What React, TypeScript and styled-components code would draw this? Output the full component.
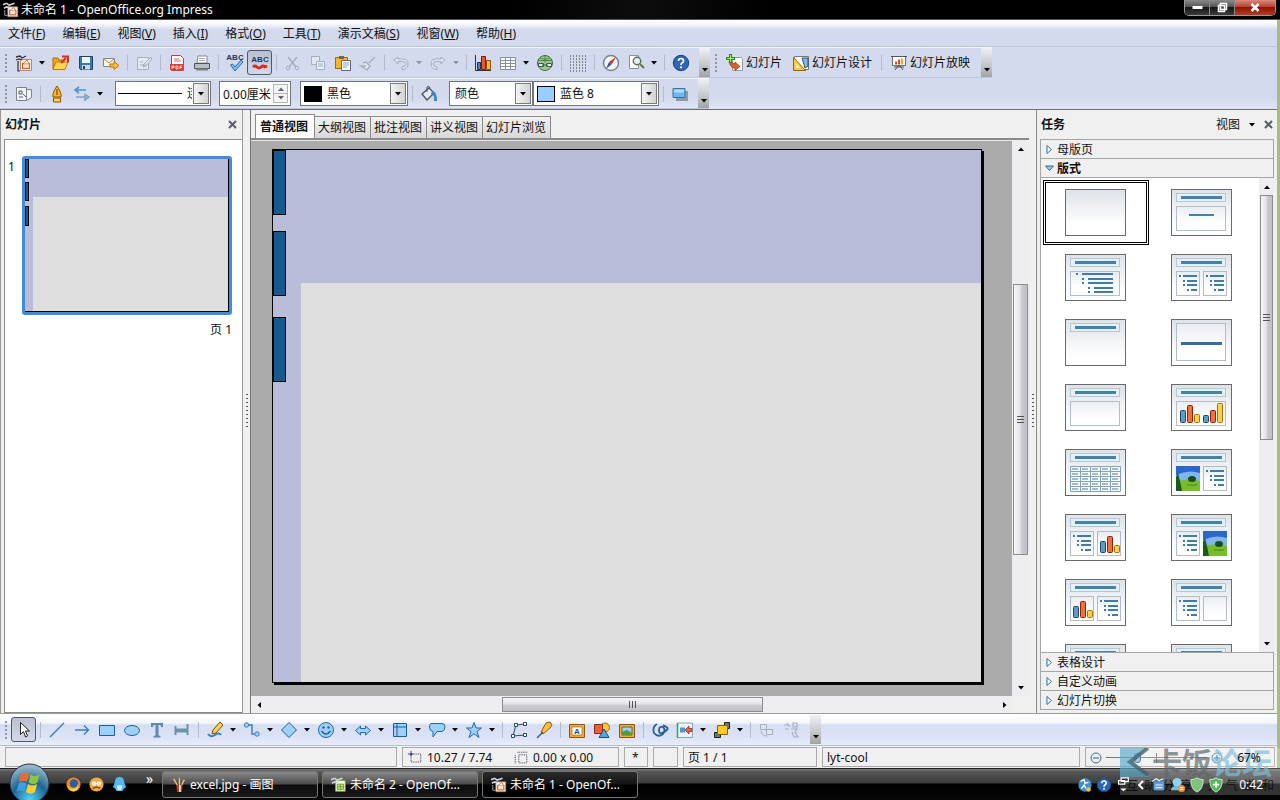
import React from "react";
import styled, { createGlobalStyle, css } from "styled-components";

const Global = createGlobalStyle`
  * { box-sizing: border-box; }
  html, body { margin: 0; padding: 0; }
  body, button, input, select {
    font-family: "Noto Sans", "Noto Sans CJK SC", sans-serif;
    font-size: 12px;
    line-height: 16px;
    color: #111;
  }
  button { border: 0; padding: 0; margin: 0; background: none; }
  svg { display: block; flex: none; }
`;

/* ---------- window frame ---------- */

const Desktop = styled.div`
  height: 100vh;
  display: flex;
  flex-direction: column;
  overflow: hidden;
  position: relative;
  background: #000;
`;

const Window = styled.div`
  flex: 1;
  min-height: 0;
  display: flex;
  flex-direction: column;
  border-right: 3px solid #a9bb83;
  background: #f0f0f0;
`;

const TitleBar = styled.header`
  height: 20px;
  margin-right: -3px;
  display: flex;
  align-items: center;
  gap: 2px;
  padding-left: 3px;
  background: linear-gradient(100deg, #000 40%, #0d0d0d 50%, #000 60%);
  border-bottom: 1px solid #555;
`;

const TitleText = styled.h1`
  margin: 0;
  flex: 1;
  font-size: 12px;
  line-height: 16px;
  font-weight: 400;
  color: #fff;
`;

const WindowButtons = styled.div`
  align-self: flex-start;
  display: flex;
  height: 16px;
  margin-right: 4px;
  border: 1px solid #999;
  border-top: 0;
  border-radius: 0 0 5px 5px;
  overflow: hidden;
`;

const WindowButton = styled.button<{ $close?: boolean }>`
  width: ${(p) => (p.$close ? 40 : 25)}px;
  height: 15px;
  display: flex;
  justify-content: center;
  align-items: center;
  border-right: ${(p) => (p.$close ? 0 : 1)}px solid #888;
  background: ${(p) =>
    p.$close
      ? "linear-gradient(#d98a7c, #b8432f 45%, #8e1404 50%, #b83a20)"
      : "linear-gradient(#8a8a8a, #555 45%, #161616 50%, #3c3c3c)"};
`;

const Ribbon = styled.div`
  background: linear-gradient(#fff, #f5f7fc 4px, #d3daed 10px, #d3daed 78px, #e0e6f6);
  border-bottom: 1px solid #6d6f78;
`;

const MenuBar = styled.nav`
  height: 27px;
  display: flex;
  align-items: flex-end;
  gap: 1px;
  border-bottom: 1px solid #bfc6d8;
`;

const MenuItem = styled.button`
  height: 24px;
  padding: 0 8px;
`;

/* ---------- toolbars ---------- */

const BarRow = styled.div`
  height: 31px;
  display: flex;
`;

const Bar = styled.div`
  display: flex;
  align-items: center;
  height: 31px;
  padding-left: 3px;
  border-top: 1px solid #f2f5fc;
  border-bottom: 1px solid #c0c7da;
`;

const DrawingBar = styled.div`
  flex: none;
  height: 33px;
  display: flex;
  align-items: center;
  padding-left: 3px;
  border-top: 1px solid #9a9a9a;
  border-bottom: 1px solid #b9bfcd;
  background: linear-gradient(#fff, #f4f6fd 9px, #d6def2 11px, #dde3f6 24px, #e9edf9);
`;

const Grip = styled.div`
  flex: none;
  width: 8px;
  height: 20px;
  background: radial-gradient(circle at 3px 2px, #8d96ab 1px, transparent 1px) 0 0 / 8px 4px;
`;

const ToolButton = styled.button<{ $pressed?: boolean }>`
  flex: none;
  width: 25px;
  height: 25px;
  display: flex;
  align-items: center;
  justify-content: center;
  ${(p) =>
    p.$pressed &&
    css`
      border: 1px solid #4e5668;
      border-radius: 3px;
      background: linear-gradient(#b9bfd0, #d3d9e8);
    `}
`;

const LabelButton = styled.button`
  height: 25px;
  display: flex;
  align-items: center;
  gap: 2px;
  padding: 0 5px;
`;

const ArrowButton = styled.button`
  flex: none;
  width: 12px;
  height: 25px;
  display: flex;
  align-items: center;
  justify-content: center;
`;

const Separator = styled.div`
  flex: none;
  width: 8px;
  height: 16px;
  background: linear-gradient(#b4bbcd, #b4bbcd) center / 1px 100% no-repeat;
`;

const Overflow = styled.button`
  flex: none;
  width: 11px;
  height: 29px;
  margin-left: 6px;
  display: flex;
  align-items: flex-end;
  justify-content: center;
  padding-bottom: 5px;
  background: linear-gradient(#eef0f6, #c5c6ca 60%, #a2a3a6);
`;

const Field = styled.div<{ $width: number; $gap?: number }>`
  position: relative;
  flex: none;
  width: ${(p) => p.$width}px;
  height: 25px;
  margin-left: ${(p) => p.$gap ?? 0}px;
  display: flex;
  align-items: center;
  border: 1px solid #6f7480;
  background: #fff;
`;

const Swatch = styled.span<{ $color: string }>`
  flex: none;
  width: 18px;
  height: 16px;
  margin-left: 3px;
  border: 1px solid #000;
  background: ${(p) => p.$color};
`;

const FieldLine = styled.span`
  flex: none;
  width: 64px;
  height: 1px;
  margin-left: 2px;
  background: #000;
`;

const Select = styled.select`
  appearance: none;
  flex: 1;
  min-width: 0;
  height: 23px;
  padding: 0 18px 0 5px;
  margin: 0;
  border: 0;
  background: transparent;
  outline: 0;
`;

const DropMark = styled.span`
  position: absolute;
  right: 1px;
  top: 1px;
  width: 16px;
  height: 21px;
  display: flex;
  align-items: center;
  justify-content: center;
  border: 1px solid #7b7b7b;
  background: linear-gradient(90deg, #f4f4f4, #d2d2d2);
  pointer-events: none;
`;

const SpinInput = styled.input`
  flex: 1;
  min-width: 0;
  height: 21px;
  padding: 0 0 0 3px;
  border: 0;
  outline: 0;
  background: transparent;
`;

const SpinButtons = styled.div`
  width: 15px;
  height: 19px;
  margin-right: 2px;
  display: flex;
  flex-direction: column;
  border: 1px solid #b5b5b5;
`;

const SpinButton = styled.button`
  flex: 1;
  display: flex;
  align-items: center;
  justify-content: center;
  background: #f4f4f4;
  & + & { border-top: 1px solid #b5b5b5; }
`;

/* ---------- work area ---------- */

const Work = styled.main`
  flex: 1;
  min-height: 0;
  display: flex;
  background: #f0f0f0;
`;

const SlidesPanel = styled.aside`
  flex: none;
  width: 243px;
  display: flex;
  flex-direction: column;
  border-left: 1px solid #999;
  border-right: 1px solid #999;
  padding: 0 0 0 3px;
`;

const PanelHeader = styled.div<{ $end: number }>`
  flex: none;
  height: 29px;
  display: flex;
  align-items: center;
  padding: 0 ${(p) => p.$end}px 0 1px;
`;

const PanelTitle = styled.h2`
  margin: 0;
  flex: 1;
  font-size: 12px;
  line-height: 16px;
  font-weight: 700;
`;

const SlideList = styled.div`
  flex: 1;
  display: flex;
  align-items: flex-start;
  padding: 16px 10px 0 3px;
  gap: 8px;
  border: 1px solid #8c8c8c;
  border-right: 0;
  background: #fff;
`;

const SlideNumber = styled.span`
  width: 6px;
  padding-top: 3px;
`;

const Figure = styled.figure`
  margin: 0;
  flex: 1;
  text-align: right;
`;

const Thumb = styled.div`
  height: 159px;
  margin-bottom: 7px;
  border: 3px solid #3e8edd;
  border-radius: 3px;
  display: flex;
`;

const ThumbPage = styled.div`
  flex: 1;
  min-width: 0;
  display: flex;
  border-right: 1px solid #000;
  border-bottom: 1px solid #000;
`;

const SplitHandle = styled.div`
  flex: none;
  width: 7px;
  display: flex;
  align-items: center;
  justify-content: center;
  background: #f0f0f0;
`;

const SplitDots = styled.div`
  width: 2px;
  height: 36px;
  background: repeating-linear-gradient(#555 0 1px, transparent 1px 4px);
`;

const Center = styled.section`
  flex: 1;
  min-width: 0;
  display: flex;
  flex-direction: column;
  border-left: 1px solid #777;
`;

const Tabs = styled.div`
  flex: none;
  height: 30px;
  display: flex;
  align-items: flex-end;
  padding-left: 4px;
  border-bottom: 2px solid #8a8a8a;
`;

const Tab = styled.button<{ $active?: boolean }>`
  height: 22px;
  padding: 0 4px 0 3px;
  border: 1px solid #8a8a8a;
  border-left-width: 0;
  border-bottom: 0;
  background: linear-gradient(#f2f2f2, #d8d8d8);
  ${(p) =>
    p.$active &&
    css`
      height: 24px;
      padding: 0 6px 0 4px;
      border-left-width: 1px;
      background: #fff;
      font-weight: 700;
    `}
`;

const CanvasGrid = styled.div`
  flex: 1;
  min-height: 0;
  display: grid;
  grid-template-columns: minmax(0, 1fr) 17px;
  grid-template-rows: minmax(0, 1fr) 17px;
`;

const Canvas = styled.div`
  display: flex;
  min-height: 0;
  padding: 8px 30px 13px 21px;
  background: #ababab;
  border-top: 1px solid #e8e8e8;
`;

const Page = styled.div`
  flex: 1;
  min-height: 0;
  display: flex;
  border: 1px solid #000;
  box-shadow: 2px 2px 0 #000;
`;

const SlideSvg = styled.svg`
  width: 100%;
  height: 100%;
`;

const ScrollBar = styled.div<{ $horizontal?: boolean }>`
  display: flex;
  flex-direction: ${(p) => (p.$horizontal ? "row" : "column")};
  background: #eeeef0;
`;

const ScrollArrow = styled.button`
  flex: none;
  min-width: 15px;
  height: 17px;
  display: flex;
  align-items: center;
  justify-content: center;
`;

const ScrollSpace = styled.div<{ $grow: number }>`
  flex: ${(p) => p.$grow} 0 0;
`;

const ScrollThumb = styled.div<{ $grow: number; $horizontal?: boolean }>`
  flex: ${(p) => p.$grow} 0 0;
  display: flex;
  align-items: center;
  justify-content: center;
  margin: ${(p) => (p.$horizontal ? "1px 0" : "0 1px")};
  border: 1px solid #8d8d8d;
  background: linear-gradient(${(p) => (p.$horizontal ? "180deg" : "90deg")}, #f6f6f7, #e4e4e8 45%, #c9c9cf 60%, #bfbfc4);
`;

/* ---------- tasks panel ---------- */

const TasksPanel = styled.aside`
  flex: none;
  width: 241px;
  display: flex;
  flex-direction: column;
  border-left: 1px solid #8c8c8c;
  padding: 0 3px 3px;
`;

const ViewMenu = styled.button`
  display: flex;
  align-items: center;
  gap: 9px;
  margin-right: 9px;
`;

const Section = styled.button<{ $open?: boolean }>`
  flex: none;
  height: 19px;
  display: flex;
  align-items: center;
  gap: 3px;
  padding: 1px 0 0 4px;
  border: 1px solid #a5a5a5;
  border-top-width: 0;
  background: #f0f0f0;
  font-weight: ${(p) => (p.$open ? 700 : 400)};
`;

const SectionGroup = styled.div`
  flex: none;
  display: flex;
  flex-direction: column;
  border-top: 1px solid #a5a5a5;
`;

const Layouts = styled.div`
  flex: 1;
  min-height: 0;
  display: flex;
  background: #fff;
  border-left: 1px solid #a5a5a5;
`;

const LayoutGrid = styled.div`
  flex: 1;
  min-height: 0;
  overflow: hidden;
  display: grid;
  grid-template-columns: 106px 106px;
  grid-auto-rows: 65px;
  align-content: start;
  padding: 2px 0 0 2px;
`;

const LayoutButton = styled.button<{ $selected?: boolean }>`
  display: flex;
  align-items: center;
  justify-content: center;
  padding-right: 1px;
  border: 3px ${(p) => (p.$selected ? "double #000" : "solid transparent")};
`;

/* ---------- status bar ---------- */

const StatusBar = styled.footer`
  flex: none;
  height: 22px;
  display: flex;
  align-items: center;
  gap: 5px;
  padding: 0 2px 0 5px;
`;

const Cell = styled.div<{ $width?: number }>`
  flex: ${(p) => (p.$width ? "none" : "1 1 0")};
  width: ${(p) => (p.$width ? p.$width + "px" : "auto")};
  height: 20px;
  display: flex;
  align-items: center;
  padding: 1px 3px 0 4px;
  gap: 4px;
  border: 1px solid #a9a9a9;
  white-space: nowrap;
`;

const Measure = styled.span`
  flex: 1;
  display: flex;
  align-items: center;
  gap: 4px;
`;

const Zoom = styled.input`
  appearance: none;
  flex: 1;
  min-width: 0;
  height: 12px;
  margin: 0;
  background: linear-gradient(#777, #777) center / 100% 1px no-repeat,
    linear-gradient(#777, #777) center / 1px 10px no-repeat;
  &::-webkit-slider-thumb {
    appearance: none;
    width: 7px;
    height: 10px;
    border: 1px solid #3a617f;
    border-radius: 3px;
    background: #8db7d4;
  }
`;

const ZoomValue = styled.span`
  position: relative;
  z-index: 1;
  width: 44px;
  text-align: center;
`;

/* ---------- taskbar ---------- */

const TaskBar = styled.div`
  flex: none;
  height: 32px;
  position: relative;
  display: flex;
  align-items: center;
  border-top: 1px solid #222;
  background: linear-gradient(#7a7a7a, #555 3px, #3c3c3c 14px, #000 15px, #050505);
  color: #fff;
`;

const StartButton = styled.button`
  position: absolute;
  left: 9px;
  top: -6px;
`;

const QuickLaunch = styled.div`
  flex: none;
  width: 162px;
  display: flex;
  align-items: center;
  gap: 6px;
  padding-left: 65px;
`;

const Chevron = styled.button`
  color: #fff;
  margin: 0 0 12px 12px;
  font-size: 14px;
`;

const Task = styled.button<{ $active?: boolean }>`
  flex: 0 1 156px;
  height: 27px;
  margin-right: 4px;
  display: flex;
  align-items: center;
  gap: 3px;
  padding-left: 8px;
  color: #fff;
  white-space: nowrap;
  border: 1px solid #777;
  border-radius: 3px;
  background: ${(p) =>
    p.$active
      ? "linear-gradient(#2a2a2a, #151515 12px, #000 13px)"
      : "linear-gradient(#8a8a8a, #4c4c4c 12px, #0c0c0c 13px, #1a1a1a)"};
`;

const Tray = styled.div`
  position: relative;
  z-index: 1;
  margin-left: auto;
  display: flex;
  align-items: center;
  gap: 3px;
  padding-right: 17px;
`;

const Clock = styled.time`
  margin-left: 12px;
  color: #fff;
`;

const Watermark = styled.div`
  position: absolute;
  right: 0;
  bottom: 5px;
  width: 160px;
  height: 47px;
  pointer-events: none;
  background: rgba(255, 255, 255, 0.2);
`;

const WatermarkName = styled.div`
  display: flex;
  align-items: center;
  height: 29px;
  font-size: 30px;
  line-height: 29px;
  font-weight: 700;
  color: rgba(95, 105, 110, 0.7);
`;

const WatermarkBlue = styled.span`
  color: rgba(125, 190, 220, 0.7);
`;

const WatermarkMotto = styled.div`
  display: flex;
  justify-content: space-between;
  padding: 1px 6px 0;
  color: rgba(0, 0, 0, 0.75);
`;

/* ---------- drawings ---------- */

const Down = ({ c = "#000" }: { c?: string }) => (
  <svg width="6" height="4" viewBox="0 0 6 4"><path d="M0 0h6L3 3.5z" fill={c} /></svg>
);
const Up = ({ c = "#000" }: { c?: string }) => (
  <svg width="6" height="4" viewBox="0 0 6 4"><path d="M0 4h6L3 .5z" fill={c} /></svg>
);
const Side = ({ flip }: { flip?: boolean }) => (
  <svg width="4" height="6" viewBox="0 0 4 6"><path d={flip ? "M0 0v6l3.5-3z" : "M4 0v6L.5 3z"} fill="#000" /></svg>
);
const Cross = () => (
  <svg width="9" height="9" viewBox="0 0 9 9"><path d="M1 1l7 7M8 1L1 8" stroke="#5c5c66" strokeWidth="2" /></svg>
);

const G = "#a6aec0";
const B = "#3a7fc0";
const F = "#9fd0f8";

const impressPage = (
  <>
    <path d="M5.500 5.500h11v11h-11z" fill="#fff" stroke="#b98a6a" />
    <path d="M7.500 9.500h7v5h-7z" fill="#fde7d6" stroke="#d9652b" strokeWidth="1.300" />
    <path d="M8 9.500l4-3.500 2 3.500" fill="#fff" stroke="#d9652b" />
  </>
);

const icons: Record<string, React.ReactNode> = {
  newDoc: <>{impressPage}<path d="M1 3l4-1 2 2 4-2M1 6l3-1 3 1" stroke="#333" strokeWidth="1.300" fill="none" /><path d="M3 7v10h2" stroke="#333" strokeWidth="1.200" fill="none" /></>,
  impress: <>{impressPage}<path d="M0 3l4-1.500 3 2 6-2M1 7l3-1.500 4 1" stroke="#cfd6de" strokeWidth="1.800" fill="none" /><path d="M2 9v6h3" stroke="#9fb0c4" fill="none" /></>,
  calcDoc: <><path d="M5 4h11v12H5z" fill="#f4fbe6" stroke="#7ca23a" /><path d="M7 8h7v6H7zM7 11h7M10.5 8v6" fill="#c5e38b" stroke="#6a9a22" /><path d="M0 3l4-1.500 3 2 6-2M1 7l3-1.500 4 1" stroke="#cfd6de" strokeWidth="1.800" fill="none" /></>,
  open: <><path d="M1 4h5l1 2h5v9H1z" fill="#f5a21c" stroke="#b0660a" /><path d="M1 15.500L4 8h12l-3 7.500z" fill="#ffd84f" stroke="#c47a10" /><path d="M9 9l5-5M10 2.500h6V8.500" stroke="#d8331c" strokeWidth="2.200" fill="none" /></>,
  save: <><path d="M2.500 2.500h13v13h-12l-1-1z" fill="#3c79ac" stroke="#1e4668" /><path d="M5 3h8v6H5z" fill="#eef5fa" /><path d="M5 11h8v4.500H5z" fill="#c9dbe8" /><path d="M6 12h2v3H6z" fill="#1e4668" /></>,
  mail: <><path d="M1.500 4.500h11v8h-11z" fill="#fbf6e6" stroke="#8f8a78" /><path d="M2 5l5 4 5-4" stroke="#8f8a78" fill="none" /><path d="M8 10h4V7.500l5 4-5 4V13H8z" fill="#ffbf3a" stroke="#b9740c" /></>,
  edit: <><path d="M2.500 3.500h11v12h-11z" fill="#e3e8f3" stroke={G} /><path d="M5 8h3M5 11h6M16 3l-7 7-1 3 3-1 6-7z" stroke={G} fill="#dfe4f0" /></>,
  pdf: <><path d="M3.500 1.500h9l3 3v12h-12z" fill="#fff" stroke="#b44" /><path d="M2 10h14v6H2z" fill="#e33b2f" /><path d="M4 15v-3h2v1.500H4M8 12v3h1.500l.5-1.500L9.500 12zM12 15v-3h2M12 13.500h2" stroke="#fff" fill="none" strokeWidth=".8" /><path d="M6 5h5M6 7h7" stroke="#e66" /></>,
  print: <><path d="M5 2h9v7H4z" fill="#fff" stroke="#888" /><path d="M1.500 9.500h15v5h-15z" fill="#b9bfc2" stroke="#4f5759" /><path d="M3 14.500h12v2H3z" fill="#7b8387" /><path d="M6 4.500h6M6 6.500h6" stroke="#aab" /></>,
  spell: <path d="M4.500 11l4.500 6 8-9-2-2-6 7-2.500-3z" fill="#7fc0f0" stroke="#2b6da6" />,
  autoSpell: <path d="M2 13q2-2 4 0t4 0 4 0l2-1" stroke="#dc2a1e" strokeWidth="2.600" fill="none" />,
  cut: <><path d="M4 3l8 10M13 3L5 13" stroke={G} strokeWidth="1.400" /><circle cx="4" cy="14" r="1.800" fill="none" stroke={G} /><circle cx="13" cy="14" r="1.800" fill="none" stroke={G} /></>,
  copy: <><path d="M2.500 2.500h8v8h-8z" fill="#e3e8f3" stroke={G} /><path d="M7.500 7.500h8v8h-8z" fill="#e9edf6" stroke={G} /><path d="M9 10h5M9 12h5" stroke={G} /></>,
  paste: <><path d="M1.500 3.500h12v11h-12z" fill="#f5b52c" stroke="#a06a0e" /><path d="M5 2h5v3H5z" fill="#666" /><path d="M7.500 6.500h9v10h-9z" fill="#fff" stroke="#667" /><path d="M9 9h6M9 11h6M9 13h4" stroke="#7aa0c8" /></>,
  brush: <path d="M16 3l-6 6M4 9l3-1 4 4-3 4-6-4 5 0" stroke={G} strokeWidth="1.500" fill="#e0e5f0" />,
  undo: <path d="M6 3L2 6l4 4V7.500h5q3 0 3 2.500t-4 3v2.500q6-.5 6-5.500t-5-5H6z" fill="#dde3f0" stroke={G} />,
  redo: <path d="M12 3l4 3-4 4V7.500H7Q4 7.500 4 10t4 3v2.500Q2 15 2 10t5-5h5z" fill="#dde3f0" stroke={G} />,
  chart: <><path d="M1.500 1v15.500H17" stroke="#333" fill="none" /><path d="M3.500 8.500h3v7h-3z" fill="#4a86c4" stroke="#234" /><path d="M7.500 2.500h4v13h-4z" fill="#f0562b" stroke="#7a1d08" /><path d="M12.500 6.500h4v9h-4z" fill="#ffb52c" stroke="#8a5505" /></>,
  table: <path d="M1.500 3.500h15v12h-15zM1.500 6.500h15M1.500 9.500h15M1.500 12.500h15M6.500 3.500v12M11.500 3.500v12" fill="#fff" stroke="#8790a0" />,
  globe: <><circle cx="9" cy="9" r="7.500" fill="#9ccc86" stroke="#3e6b46" /><path d="M2 6.500h14M9 1.500v7M4 4q5 3 10 0" stroke="#4d8352" fill="none" /><path d="M2.500 9.500h5v3h-5zM10.500 9.500h5v3h-5zM6 11h6" fill="#e6ecef" stroke="#3c5560" /></>,
  dots: <path d="M1 2h17M1 5h17M1 8h17M1 11h17M1 14h17M1 17h17" stroke="#333" strokeDasharray="1 2" />,
  compass: <><circle cx="9" cy="9" r="7.500" fill="#f3f6fa" stroke="#7b8593" strokeWidth="1.500" /><path d="M14 3l-4 7-3-2z" fill="#d9301f" /><path d="M4 15l3-7 3 2z" fill="#2a5c9c" /></>,
  find: <><path d="M2.500 1.500h9v13h-9z" fill="#fff" stroke="#8b8f99" /><circle cx="10" cy="7" r="3.700" fill="#e6f1ee" stroke="#5a6b54" strokeWidth="1.400" /><path d="M13 10l4 4" stroke="#6a7a3a" strokeWidth="2" /></>,
  help: <><circle cx="9" cy="9" r="7.700" fill="#2d66b4" stroke="#1c4582" /><path d="M6.500 7q0-2.500 2.500-2.500T11.500 7q0 1.200-1.500 2-1 .6-1 2" stroke="#fff" strokeWidth="1.700" fill="none" /><circle cx="9" cy="13.300" r="1.100" fill="#fff" /></>,
  styles: <><path d="M1.500 2.500h10v13h-10zM11.500 4.500h5v8l-5 3" fill="#f3f3f6" stroke="#7d8290" /><path d="M4 6h3v3H4zM8 9l3 3M4 12h4" stroke="#565d70" fill="none" /></>,
  pen: <><path d="M9 1Q4 8 5 12h8q1-4-4-11z" fill="#ffb62e" stroke="#8c5206" /><path d="M9 4v6" stroke="#5b3403" /><path d="M5.500 13h7v4h-7z" fill="#ffd45c" stroke="#8c5206" /></>,
  arrows: <><path d="M13 5H3M6 2L2 5l4 3" stroke="#4a94d0" strokeWidth="1.600" fill="none" /><path d="M3 12h10M12 9.500l4 2.500-4 3z" stroke="#7fa3c2" strokeWidth="1.500" fill="#9ec6e6" /></>,
  bucket: <><path d="M2 9l7-6 5 5-7 7z" fill="#e7ebef" stroke="#4b545c" strokeWidth="1.300" /><path d="M7 7V2q2-2 3 1" stroke="#4b545c" fill="none" /><path d="M12 6q5 0 5 10h-3q1-6-3-7z" fill="#3c85c4" /></>,
  shadow: <><path d="M5 6h12v10H5z" fill="#8f98a6" /><path d="M2 3.500h12v9H2z" fill="#6fb6f0" stroke="#2c75b5" /><path d="M3 4.500h10v3H3z" fill="#b7dcfa" /></>,
  addSlide: <><path d="M6.500 3.500h9l1 1v12h-10z" fill="#fff" stroke="#999" /><path d="M3 7l6 3V8l5 4.500-5 4v-2q-5-1-6-7.500z" fill="#d9622c" stroke="#8c3b12" strokeWidth=".7" /><path d="M4.500 0v9M0 4.500h9" stroke="#2f8a1d" strokeWidth="3" /><path d="M4.500 1v7M1 4.500h7" stroke="#a9ec6a" strokeWidth="1" /></>,
  design: <><path d="M2.500 2.500h14v13h-14z" fill="#fff" stroke="#777" /><path d="M10 4h6v8l-3 2z" fill="#86b7dd" stroke="#2c4f74" /><path d="M1.500 3.500l12 13h-12z" fill="#ffc83b" stroke="#9a650a" /><path d="M4 9.500l4 4.500H4z" fill="#fff3c8" /></>,
  show: <><path d="M2.500 2.500h13v9h-13z" fill="#fff" stroke="#777" strokeWidth="1.200" /><path d="M1 2.500h16M5 16l3-4h2l3 4M4 13h10" stroke="#555" fill="none" /><path d="M5 7.500h2v3H5zM8 5.500h2v5H8z" fill="#e2482a" /><path d="M11 4.500h2v6h-2z" fill="#f5a624" /></>,
  pointer: <path d="M5.500 1.500v12l3-3 2 5.500 2-1-2-5h4z" fill="#fff" stroke="#222" />,
  line: <path d="M2 16L16 2" stroke={B} strokeWidth="1.400" />,
  arrow: <path d="M2 9h13M11 4.500L15.500 9 11 13.500" stroke={B} strokeWidth="1.400" fill="none" />,
  rect: <path d="M1.500 4.500h15v10h-15z" fill={F} stroke="#1e5e9e" />,
  ellipse: <ellipse cx="9" cy="9.500" rx="7.500" ry="5" fill={F} stroke="#1e5e9e" />,
  text: <path d="M3 2h12v4h-2l-.5-2H10.500v10.500l2 .5v1.500h-7V15l2-.5V4H5.500L5 6H3z" fill="#5d8aae" />,
  dim: <path d="M2.500 5v9M14.500 3v11M3 8.500h11v2H3z" stroke="#6e91ab" strokeWidth="2" fill="#6e91ab" />,
  pencil: <><path d="M2 13q3 4 7 1t6 0" stroke={B} strokeWidth="2" fill="none" /><path d="M14 1l3 3-7 8-4 1 1-4z" fill="#ffcf4f" stroke="#6e5314" /></>,
  connector: <><path d="M5 4h4v9h4" stroke={B} strokeWidth="1.500" fill="none" /><circle cx="3.500" cy="4" r="2.200" fill={F} stroke={B} /><circle cx="14" cy="13" r="2.200" fill={F} stroke={B} /></>,
  diamond: <path d="M9 1.500L16.500 9 9 16.500 1.500 9z" fill={F} stroke="#1e5e9e" />,
  smiley: <><circle cx="9" cy="9" r="7.500" fill={F} stroke="#1e68b0" /><path d="M4.500 10q4.500 6 9 0" stroke="#1e5e9e" strokeWidth="1.400" fill="none" /><circle cx="6.500" cy="6.500" r="1.200" fill="#1e5e9e" /><circle cx="11.500" cy="6.500" r="1.200" fill="#1e5e9e" /></>,
  blockArrow: <path d="M1.500 9.500l5-4.500v2.500h5V5l5 4.500-5 4.500v-2.500h-5V14z" fill={F} stroke="#1e68b0" />,
  flow: <path d="M2.500 2.500h13v13h-13zM6 2.500v13M2.500 6h13" fill={F} stroke="#1e5e9e" />,
  callout: <path d="M4 2.500h10q3 0 3 3.500t-3 4.500H9l-4 5.500 0-5.500Q1.500 10 1.500 6T4 2.500z" fill={F} stroke="#1e68b0" />,
  star: <path d="M9 1.500l2 5.500h5.500L12 10.500l2 6-5-3.700-5 3.700 2-6L1.500 7H7z" fill={F} stroke="#1e68b0" />,
  points: <><path d="M15 3L6 4 3 15l12-1" stroke="#345" fill="none" /><path d="M4.500 2.500h3v3h-3zM13.500 1.500h3v3h-3zM1.500 13.500h3v3h-3zM13.500 12.500h3v3h-3z" fill="#fff" stroke="#234a70" /></>,
  glue: <><path d="M11 2l4-1 2 3-2 3-7 6-2-2z" fill="#ffbe3d" stroke="#8a5a0c" /><path d="M8 11l-6 6" stroke="#456" strokeWidth="1.500" /></>,
  fontwork: <><path d="M1.500 3.500h15v13h-15z" fill="#f6a83a" stroke="#8d560c" /><path d="M4 6h10v8H4z" fill="#fff" stroke="#8d560c" strokeWidth=".6" /></>,
  gallery: <><circle cx="12" cy="6.500" r="4.500" fill="#ffc63c" stroke="#94650c" /><path d="M1.500 3.500h8v9h-8z" fill="#ee5f37" stroke="#8a2a0c" /><path d="M11 8l5 8.500H6z" fill="#5aa3df" stroke="#1e4d7c" /></>,
  picture: <><path d="M1.500 3.500h15v13h-15z" fill="#f6a83a" stroke="#8d560c" /><path d="M4 6h10v8H4z" fill="#9cd0ee" stroke="#5c6a30" /><path d="M4 11l5-2 5 3v2H4z" fill="#4d9a43" /></>,
  rotate: <path d="M6 3Q1 6 3 12q4 5 9 1 3-4 0-7-4-1-4 3t3 3q4-1 6-5M12 4l5 3" stroke="#2c628f" strokeWidth="1.800" fill="none" />,
  align: <><path d="M1.500 2v14.500h15V2z" fill="#eef1f9" stroke="#8aa" /><path d="M1.500 2v15" stroke="#2faa3c" strokeWidth="1.500" /><path d="M4 6.500h5v5H4z" fill="#4b97cf" /><path d="M9 9l4-4v2.500h3v3h-3V13z" fill="#ee5a4e" stroke="#8d211c" strokeWidth=".7" /></>,
  order: <><path d="M11.500 1.500h5v6h-5zM1.500 11.500h6v5h-6z" fill="#6b7484" stroke="#222" /><path d="M4.500 4.500h10v9h-10z" fill="#ffc928" stroke="#8a6208" /></>,
  ext: <path d="M2.500 3.500h6v5h-6zM8.500 8.500h6v5h-6zM3 10q1 5 6 5" fill="#e0e5f2" stroke={G} />,
  anim: <path d="M10 2h4v4h-4zM8 8h6l-2 3 3 5h-4l-2-5M1 4h5M2 8h4M4 2l3 4" fill="none" stroke={G} strokeWidth="1.200" />,
  coords: <><path d="M4.500 4.500h11v9h-11z" fill="none" stroke="#223" strokeDasharray="1 1" /><path d="M1 4.500h6M4.500 1v6" stroke="#226" /></>,
  size: <path d="M6.500 5.500h9v9h-9zM5 2.500h11M2.500 6v9" fill="none" stroke="#223" strokeDasharray="1 1" />,
  fox: <><circle cx="9" cy="9" r="7.500" fill="#f08a1d" /><circle cx="9.500" cy="8" r="4.500" fill="#2d5fa8" /><path d="M2 6q1 9 8 7 4-1 3-5 3 6-2 8-8 2-9-10z" fill="#ffd04a" /></>,
  face: <><circle cx="9" cy="9" r="7.500" fill="#f1a84a" /><circle cx="6.500" cy="8" r="2.500" fill="#fff0cf" /><circle cx="11.500" cy="8" r="2.500" fill="#fff0cf" /><path d="M5 13q4-2 8 0" stroke="#8a4d10" strokeWidth="1.500" fill="none" /></>,
  qq: <><path d="M9 1q5 0 5 6l2 5-2 1-2 3H6l-2-3-2-1 2-5q0-6 5-6z" fill="#56b9ee" /><path d="M6 10h6l-1 5H7z" fill="#c9edff" /></>,
  paint: <><path d="M6 9h7l-1 8H7z" fill="#c33a1e" /><path d="M7 9L3 2M9.500 9V1M12 9l3-6" stroke="#f1c27a" strokeWidth="1.600" /><path d="M9 9h2v8H9z" fill="#f0ead8" /></>,
  world: <><circle cx="9" cy="9" r="7.500" fill="#3f8ec9" /><path d="M4 5l4-2 1 4 4-1M5 13l3-4 2 4" stroke="#fff" strokeWidth="1.600" fill="none" /><circle cx="13" cy="14" r="2.500" fill="#f2c436" /></>,
  restore: <><path d="M7 1h8v4H7zM4 4h7v4H4z" fill="#333" stroke="#fff" strokeWidth="1.300" /><path d="M6 13h7l-3.500 3z" fill="#fff" /></>,
  bird: <><path d="M3 5h12v10H3z" fill="#5b9bdb" /><path d="M1 5l5-3 3 2 5-2M5 9h8M5 12h8" stroke="#e5f2ff" strokeWidth="1.400" fill="none" /></>,
  buddy: <><circle cx="8" cy="6" r="5" fill="#8fd3f2" /><path d="M1 15q0-5 7-5t7 5z" fill="#6cc0ea" /><circle cx="13" cy="13" r="4" fill="#f0913a" /><path d="M11 12h4M11 14h4" stroke="#fff" /></>,
  shield: <><path d="M2 3q4 0 7-2 3 2 7 2 0 11-7 14-7-3-7-14z" fill="#54b85a" stroke="#d7f0d5" /><path d="M9 5v7M5.500 8.500h7" stroke="#fff" strokeWidth="2" /></>,
  shieldPlain: <path d="M2 3q4 0 7-2 3 2 7 2 0 11-7 14-7-3-7-14z" fill="#7cc47a" stroke="#cfe8cc" />,
};

const Icon = ({ name, size = 18 }: { name: string; size?: number }) => (
  <svg width={size} height={size} viewBox="0 0 18 18" aria-hidden="true">
    {icons[name]}
    {(name === "spell" || name === "autoSpell") && (
      <text x="9" y={name === "spell" ? 6 : 8} textAnchor="middle" fontFamily="Liberation Sans" fontSize="8" fontWeight="700" fill="#23395c">ABC</text>
    )}
    {name === "fontwork" && (
      <text x="9" y="13" textAnchor="middle" fontFamily="Liberation Sans" fontSize="8" fontWeight="700" fill="#1d4f86">A</text>
    )}
  </svg>
);

const SlideArt = () => (
  <SlideSvg viewBox="0 0 709 532" preserveAspectRatio="none" aria-hidden="true">
    <path d="M0 0h709v532H0z" fill="#babdda" />
    <path d="M28 133h681v399H28z" fill="#dedede" />
    {[0, 81, 167].map((y) => (
      <rect key={y} x="0" y={y} width="13" height="64" fill="#155a8c" stroke="#000" vectorEffect="non-scaling-stroke" shapeRendering="crispEdges" />
    ))}
  </SlideSvg>
);

const Bullets = ({ x }: { x: number }) => (
  <g fill="#3f7da6">
    {[[0, 22], [4, 27], [4, 31], [8, 36]].map(([o, y]) => (
      <React.Fragment key={y}>
        <rect x={x + 3 + o} y={y - 1} width="2" height="2" />
        <rect x={x + 7 + o} y={y - 1} width={14 - o} height="2" />
      </React.Fragment>
    ))}
  </g>
);

const Box = ({ x = 5, y = 17, w = 50, h = 25 }: { x?: number; y?: number; w?: number; h?: number }) => (
  <rect x={x + 0.5} y={y + 0.5} width={w - 1} height={h - 1} fill="url(#paper)" stroke="#b3bcc6" />
);

const Bars = ({ x, tops }: { x: number; tops: number[] }) => (
  <g>
    {tops.map((t, i) => (
      <rect
        key={i}
        x={x + (i % 3) * 7 + (i > 2 ? 23 : 0) + 0.5}
        y={t + 0.5}
        width="5"
        height={38 - t}
        rx="1"
        fill={["#5d9cc8", "#f4703a", "#ffd04a"][i % 3]}
        stroke={["#1c4566", "#8a2206", "#a5700a"][i % 3]}
      />
    ))}
  </g>
);

const Photo = ({ x }: { x: number }) => (
  <g>
    <rect x={x} y="17" width="24" height="25" fill="#2b66cf" />
    <path d={`M${x} 26q12-6 24-2v8h-24z`} fill="#7fb6ee" />
    <path d={`M${x} 32q12-3 24 0v10h-24z`} fill="#79bd2c" />
    <path d={`M${x} 42v-14l2-4 2 8 2 10z`} fill="#1c5a1a" />
    <ellipse cx={x + 16} cy="30" rx="4" ry="3" fill="#17501c" />
    <path d={`M${x + 11} 36h10`} stroke="#3f8a20" />
  </g>
);

const kinds = [
  "blank", "title", "outline", "two", "titleOnly", "centered", "object", "chart",
  "table", "photoText", "textChart", "textPhoto", "chartText", "textObject", "titleOnly", "titleOnly",
];

const LayoutArt = ({ kind }: { kind: string }) => (
  <svg width="61" height="47" viewBox="0 0 61 47" aria-hidden="true">
    <defs>
      <linearGradient id="paper" x1="0" y1="0" x2="0" y2="1">
        <stop offset="0" stopColor="#e9edf2" />
        <stop offset=".7" stopColor="#fff" />
      </linearGradient>
      <linearGradient id="sheet" x1="0" y1="0" x2="0" y2="1">
        <stop offset="0" stopColor="#dfe3e7" />
        <stop offset=".8" stopColor="#fff" />
      </linearGradient>
    </defs>
    <rect x=".5" y=".5" width="60" height="46" fill="url(#sheet)" stroke="#6a6a6a" />
    {kind !== "blank" && kind !== "centered" && (
      <g>
        <rect x="5.500" y="4.500" width="49" height="8" fill="#e2f1fa" stroke="#b5c6d4" />
        <rect x="10" y="7" width="41" height="3" fill="#4682a8" />
      </g>
    )}
    {kind === "title" && <g><Box /><rect x="18" y="25" width="25" height="2" fill="#4682a8" /></g>}
    {kind === "outline" && (
      <g fill="#3f7da6">
        <Box />
        {[[12, 20], [18, 25], [18, 29], [24, 34], [24, 38]].map(([x, y]) => (
          <React.Fragment key={y}>
            <rect x={x - 1} y={y - 1} width="2" height="2" />
            <rect x={x + 5} y={y - 1} width={43 - x} height="2" />
          </React.Fragment>
        ))}
      </g>
    )}
    {kind === "two" && <g><Box w={24} /><Box x={32} w={24} /><Bullets x={5} /><Bullets x={32} /></g>}
    {kind === "centered" && <g><Box y={4} h={38} /><rect x="10" y="23" width="41" height="3" fill="#35709a" /></g>}
    {kind === "object" && <Box />}
    {kind === "chart" && <g><Box /><Bars x={9} tops={[26, 21, 30, 31, 26, 19]} /></g>}
    {kind === "table" && (
      <g>
        <path d="M5.500 17.500h50v25h-50zM5.500 22.500h50M5.500 27.500h50M5.500 32.500h50M5.500 37.500h50M15.500 17.500v25M25.500 17.500v25M35.500 17.500v25M45.500 17.500v25" fill="#f4fafd" stroke="#86a2b4" />
        {[20, 25, 30, 35, 40].map((y) => (
          <path key={y} d={`M7 ${y}h48`} stroke="#4b7f9f" strokeDasharray="6 4" />
        ))}
      </g>
    )}
    {kind === "photoText" && <g><Photo x={5} /><Box x={32} w={24} /><Bullets x={32} /></g>}
    {kind === "textPhoto" && <g><Box w={24} /><Bullets x={5} /><Photo x={32} /></g>}
    {kind === "textChart" && <g><Box w={24} /><Bullets x={5} /><Box x={32} w={24} /><Bars x={35} tops={[27, 22, 31]} /></g>}
    {kind === "chartText" && <g><Box w={24} /><Bars x={8} tops={[27, 22, 31]} /><Box x={32} w={24} /><Bullets x={32} /></g>}
    {kind === "textObject" && <g><Box w={24} /><Bullets x={5} /><Box x={32} w={24} /></g>}
  </svg>
);

const StartOrb = () => (
  <svg width="41" height="41" viewBox="0 0 41 41" aria-hidden="true">
    <defs>
      <radialGradient id="orb" cx=".5" cy=".9" r=".9">
        <stop offset="0" stopColor="#4fd2f2" />
        <stop offset=".5" stopColor="#1d6595" />
        <stop offset="1" stopColor="#a9c3d2" />
      </radialGradient>
    </defs>
    <circle cx="20.500" cy="20.500" r="19.500" fill="url(#orb)" stroke="#20303c" />
    <path d="M12 11q4-3 8 0l-2 8q-4-2-8 0z" fill="#ee6a2e" />
    <path d="M21.500 11.500q4 3 9 0l-2 8q-4 3-9 0z" fill="#8cc63f" />
    <path d="M9.500 20.500q4-3 8 0l-2 8q-4-2-8 0z" fill="#3f9de0" />
    <path d="M19 21q4 3 9 0l-2 8q-4 3-9 0z" fill="#ffcc2e" />
  </svg>
);

/* ---------- data ---------- */

type Tool = { icon: string; label: string; drop?: boolean; pressed?: boolean } | "sep";

const standard: Tool[] = [
  { icon: "newDoc", label: "新建", drop: true }, { icon: "open", label: "打开" }, { icon: "save", label: "保存" },
  { icon: "mail", label: "电子邮件" }, "sep", { icon: "edit", label: "编辑文件" }, "sep",
  { icon: "pdf", label: "导出 PDF" }, { icon: "print", label: "打印" }, "sep",
  { icon: "spell", label: "拼写检查" }, { icon: "autoSpell", label: "自动拼写检查", pressed: true }, "sep",
  { icon: "cut", label: "剪切" }, { icon: "copy", label: "复制" }, { icon: "paste", label: "粘贴" },
  { icon: "brush", label: "格式刷" }, "sep", { icon: "undo", label: "撤消", drop: true },
  { icon: "redo", label: "恢复", drop: true }, "sep", { icon: "chart", label: "图表" },
  { icon: "table", label: "表格", drop: true }, { icon: "globe", label: "超链接" }, "sep",
  { icon: "dots", label: "显示网格" }, "sep", { icon: "compass", label: "导航" },
  { icon: "find", label: "缩放", drop: true }, "sep", { icon: "help", label: "帮助" },
];

const lineTools: Tool[] = [
  { icon: "styles", label: "样式" }, "sep", { icon: "pen", label: "线条" },
  { icon: "arrows", label: "箭头样式", drop: true },
];

const drawing: Tool[] = [
  { icon: "pointer", label: "选择", pressed: true }, "sep", { icon: "line", label: "直线" },
  { icon: "arrow", label: "箭头线" }, { icon: "rect", label: "矩形" }, { icon: "ellipse", label: "椭圆" },
  { icon: "text", label: "文字" }, { icon: "dim", label: "尺寸线" }, "sep",
  { icon: "pencil", label: "曲线", drop: true }, { icon: "connector", label: "连接符", drop: true },
  { icon: "diamond", label: "基本形状", drop: true }, { icon: "smiley", label: "符号形状", drop: true },
  { icon: "blockArrow", label: "箭头总汇", drop: true }, { icon: "flow", label: "流程图", drop: true },
  { icon: "callout", label: "图例", drop: true }, { icon: "star", label: "星形", drop: true }, "sep",
  { icon: "points", label: "接点" }, { icon: "glue", label: "粘着点" }, "sep",
  { icon: "fontwork", label: "艺术字" }, { icon: "gallery", label: "图片库" }, { icon: "picture", label: "来自文件" }, "sep",
  { icon: "rotate", label: "旋转" }, { icon: "align", label: "对齐", drop: true },
  { icon: "order", label: "排列", drop: true }, "sep", { icon: "ext", label: "突出" }, { icon: "anim", label: "交互" },
];

const menus: [string, string][] = [
  ["文件", "F"], ["编辑", "E"], ["视图", "V"], ["插入", "I"], ["格式", "O"],
  ["工具", "T"], ["演示文稿", "S"], ["视窗", "W"], ["帮助", "H"],
];

const Tools = ({ items }: { items: Tool[] }) => (
  <>
    {items.map((t, i) =>
      t === "sep" ? (
        <Separator key={i} />
      ) : (
        <React.Fragment key={i}>
          <ToolButton aria-label={t.label} $pressed={t.pressed}><Icon name={t.icon} /></ToolButton>
          {t.drop && (
            <ArrowButton aria-label={t.label + "选项"}>
              <Down c={t.icon === "undo" || t.icon === "redo" ? "#8f98aa" : "#000"} />
            </ArrowButton>
          )}
        </React.Fragment>
      )
    )}
  </>
);

const Drop = ({ label, value, width, gap, children }: {
  label: string; value: string; width: number; gap?: number; children?: React.ReactNode;
}) => (
  <Field $width={width} $gap={gap}>
    {children}
    <Select aria-label={label} defaultValue={value}><option>{value}</option></Select>
    <DropMark><Down /></DropMark>
  </Field>
);

const More = () => <Overflow aria-label="更多"><Down /></Overflow>;

const Scroll = ({ parts, horizontal }: { parts: [number, number, number]; horizontal?: boolean }) => (
  <ScrollBar $horizontal={horizontal}>
    <ScrollArrow aria-label="后退">{horizontal ? <Side /> : <Up />}</ScrollArrow>
    <ScrollSpace $grow={parts[0]} />
    <ScrollThumb $grow={parts[1]} $horizontal={horizontal}>
      <svg width="7" height="7" viewBox="0 0 7 7">
        <path d={horizontal ? "M.5 0v7M3.500 0v7M6.500 0v7" : "M0 .5h7M0 3.500h7M0 6.500h7"} stroke="#555" />
      </svg>
    </ScrollThumb>
    <ScrollSpace $grow={parts[2]} />
    <ScrollArrow aria-label="前进">{horizontal ? <Side flip /> : <Down />}</ScrollArrow>
  </ScrollBar>
);

const Triangle = ({ open }: { open?: boolean }) => (
  <svg width="9" height="9" viewBox="0 0 9 9" aria-hidden="true">
    <path d={open ? "M.5 2h8l-4 4.500z" : "M2 .5v8l4.500-4z"} fill={open ? "#9cc4e0" : "#fff"} stroke="#2f6f9f" />
  </svg>
);

export default function App() {
  return (
    <Desktop>
      <Global />
      <Window>
        <TitleBar>
          <Icon name="impress" size={16} />
          <TitleText>未命名 1 - OpenOffice.org Impress</TitleText>
          <WindowButtons>
            <WindowButton aria-label="最小化"><svg width="11" height="5"><path d="M.5 1h10v3H.5z" fill="#fff" /></svg></WindowButton>
            <WindowButton aria-label="还原"><svg width="11" height="11"><path d="M3.500 1.500h6v6h-6zM1.500 3.500h6v6h-6z" fill="#444" stroke="#fff" strokeWidth="1.500" /></svg></WindowButton>
            <WindowButton aria-label="关闭" $close><svg width="10" height="9"><path d="M1.500 1l7 7M8.500 1l-7 7" stroke="#fff" strokeWidth="2.500" /></svg></WindowButton>
          </WindowButtons>
        </TitleBar>
        <Ribbon>
          <MenuBar>
            {menus.map(([name, key]) => <MenuItem key={key}>{name}(<u>{key}</u>)</MenuItem>)}
          </MenuBar>
          <BarRow>
            <Bar><Grip /><Tools items={standard} /><More /></Bar>
            <Bar>
              <Grip />
              <LabelButton><Icon name="addSlide" />幻灯片</LabelButton>
              <LabelButton><Icon name="design" />幻灯片设计</LabelButton>
              <Separator />
              <LabelButton><Icon name="show" />幻灯片放映</LabelButton>
              <More />
            </Bar>
          </BarRow>
          <BarRow>
            <Bar>
              <Grip />
              <Tools items={lineTools} />
              <Drop label="线条样式" value="连续" width={96} gap={9}><FieldLine /></Drop>
              <Field $width={72} $gap={8}>
                <SpinInput aria-label="线条宽度" defaultValue="0.00厘米" />
                <SpinButtons>
                  <SpinButton aria-label="增加"><Up c="#666" /></SpinButton>
                  <SpinButton aria-label="减少"><Down c="#666" /></SpinButton>
                </SpinButtons>
              </Field>
              <Drop label="线条颜色" value="黑色" width={108} gap={9}><Swatch $color="#000" /></Drop>
              <Separator />
              <ToolButton aria-label="区域"><Icon name="bucket" /></ToolButton>
              <Drop label="填充类型" value="颜色" width={84} gap={8} />
              <Drop label="填充颜色" value="蓝色 8" width={126}><Swatch $color="#99ccff" /></Drop>
              <Separator />
              <ToolButton aria-label="阴影"><Icon name="shadow" /></ToolButton>
              <More />
            </Bar>
          </BarRow>
        </Ribbon>
        <Work>
          <SlidesPanel>
            <PanelHeader $end={5}>
              <PanelTitle>幻灯片</PanelTitle>
              <button aria-label="关闭幻灯片面板"><Cross /></button>
            </PanelHeader>
            <SlideList>
              <SlideNumber>1</SlideNumber>
              <Figure>
                <Thumb><ThumbPage><SlideArt /></ThumbPage></Thumb>
                <figcaption>页 1</figcaption>
              </Figure>
            </SlideList>
          </SlidesPanel>
          <SplitHandle><SplitDots /></SplitHandle>
          <Center>
            <Tabs role="tablist">
              {["普通视图", "大纲视图", "批注视图", "讲义视图", "幻灯片浏览"].map((t, i) => (
                <Tab key={t} role="tab" aria-selected={i === 0} $active={i === 0}>{t}</Tab>
              ))}
            </Tabs>
            <CanvasGrid>
              <Canvas><Page><SlideArt /></Page></Canvas>
              <Scroll parts={[127, 269, 124]} />
              <Scroll horizontal parts={[236, 258, 234]} />
            </CanvasGrid>
          </Center>
          <SplitHandle><SplitDots /></SplitHandle>
          <TasksPanel>
            <PanelHeader $end={1}>
              <PanelTitle>任务</PanelTitle>
              <ViewMenu>视图<Down /></ViewMenu>
              <button aria-label="关闭任务面板"><Cross /></button>
            </PanelHeader>
            <SectionGroup>
              <Section><Triangle />母版页</Section>
              <Section $open><Triangle open />版式</Section>
            </SectionGroup>
            <Layouts>
              <LayoutGrid>
                {kinds.map((k, i) => (
                  <LayoutButton key={i} aria-label={"版式 " + (i + 1)} $selected={i === 0}><LayoutArt kind={k} /></LayoutButton>
                ))}
              </LayoutGrid>
              <Scroll parts={[0, 244, 195]} />
            </Layouts>
            <SectionGroup>
              <Section><Triangle />表格设计</Section>
              <Section><Triangle />自定义动画</Section>
              <Section><Triangle />幻灯片切换</Section>
            </SectionGroup>
          </TasksPanel>
        </Work>
        <DrawingBar><Grip /><Tools items={drawing} /><More /></DrawingBar>
        <StatusBar>
          <Cell $width={392} />
          <Cell $width={217}>
            <Measure><Icon name="coords" size={16} />10.27 / 7.74</Measure>
            <Measure><Icon name="size" size={16} />0.00 x 0.00</Measure>
          </Cell>
          <Cell $width={24}>&nbsp;*</Cell>
          <Cell $width={25} />
          <Cell $width={134}>页 1 / 1</Cell>
          <Cell>lyt-cool</Cell>
          <Cell $width={190}>
            <svg width="12" height="12" viewBox="0 0 12 12"><circle cx="6" cy="6" r="5" fill="#e6f1f8" stroke="#44738f" /><path d="M3 6h6" stroke="#2a5c7c" /></svg>
            <Zoom type="range" aria-label="缩放" min={0} max={100} defaultValue={30} />
            <svg width="12" height="12" viewBox="0 0 12 12"><circle cx="6" cy="6" r="5" fill="#e6f1f8" stroke="#44738f" /><path d="M3 6h6M6 3v6" stroke="#2a5c7c" /></svg>
            <ZoomValue>67%</ZoomValue>
          </Cell>
        </StatusBar>
      </Window>
      <TaskBar>
        <StartButton aria-label="开始"><StartOrb /></StartButton>
        <QuickLaunch>
          <Icon name="fox" size={17} />
          <Icon name="face" size={17} />
          <Icon name="qq" size={17} />
          <Chevron>»</Chevron>
        </QuickLaunch>
        <Task><Icon name="paint" size={16} />excel.jpg - 画图</Task>
        <Task><Icon name="calcDoc" size={16} />未命名 2 - OpenOf...</Task>
        <Task $active><Icon name="impress" size={16} />未命名 1 - OpenOf...</Task>
        <Tray>
          <Icon name="world" size={16} />
          <Icon name="help" size={16} />
          <Icon name="restore" size={16} />
          <svg width="14" height="12"><path d="M9 2L5 6l4 4" stroke="#fff" strokeWidth="2" fill="none" /></svg>
          <Icon name="bird" size={16} />
          <Icon name="buddy" size={16} />
          <Icon name="shieldPlain" size={16} />
          <Icon name="shield" size={16} />
          <Clock>0:42</Clock>
        </Tray>
      </TaskBar>
      <Watermark>
        <WatermarkName>
          <svg width="32" height="29" viewBox="0 0 32 29"><path d="M0 0h28L14 14l16 15H0z" fill="rgba(70,160,200,.6)" /><path d="M28 0L10 14l18 13" stroke="rgba(70,90,100,.7)" strokeWidth="4" fill="none" /></svg>
          卡饭<WatermarkBlue>论坛</WatermarkBlue>
        </WatermarkName>
        <WatermarkMotto>
          {"互助分享·大气谦和".split("").map((c, i) => <span key={i}>{c}</span>)}
        </WatermarkMotto>
      </Watermark>
    </Desktop>
  );
}
